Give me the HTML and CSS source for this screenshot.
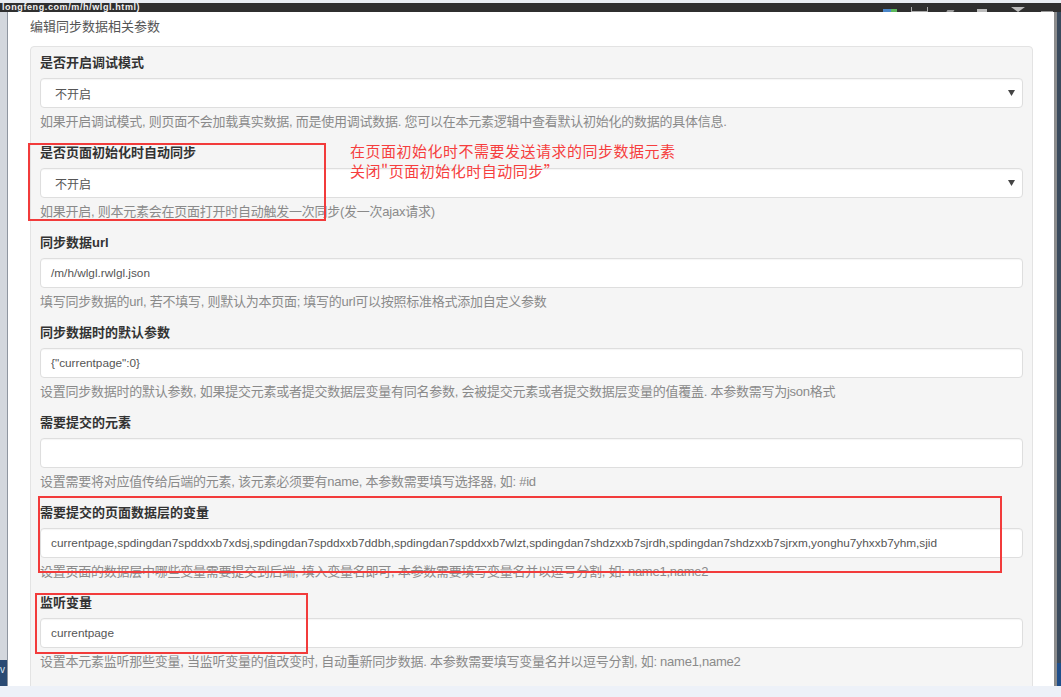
FILE: index.html
```html
<!DOCTYPE html>
<html lang="zh-CN">
<head>
<meta charset="utf-8">
<title>编辑同步数据相关参数</title>
<link rel="stylesheet" href="styles.css">
</head>
<body>
<div class="screen">
  <div class="topstrip"></div>
  <div class="titlebar">
    <span class="url">longfeng.com/m/h/wlgl.html)</span>
    <div class="tray">
      <span class="ti ti-net"></span>
      <span class="ti ti-kbd"></span>
      <span class="ti ti-pen"></span>
      <span class="ti ti-bat"></span>
      <span class="ti ti-wifi"></span>
      <span class="ti ti-vol"></span>
    </div>
  </div>
  <div class="middle">
    <div class="leftedge"><div class="leftblock">v</div></div>
    <div class="modal">
      <div class="modal-title">编辑同步数据相关参数</div>
      <div class="panel">
        <div class="group">
          <div class="label">是否开启调试模式</div>
          <div class="control select"><span class="val sel">不开启</span><svg class="caret" width="7" height="6" viewBox="0 0 7 6"><path d="M0 0H7L3.5 6Z" fill="#444"/></svg></div>
          <div class="help">如果开启调试模式, 则页面不会加载真实数据, 而是使用调试数据. 您可以在本元素逻辑中查看默认初始化的数据的具体信息.</div>
        </div>
        <div class="group">
          <div class="label">是否页面初始化时自动同步</div>
          <div class="control select"><span class="val sel">不开启</span><svg class="caret" width="7" height="6" viewBox="0 0 7 6"><path d="M0 0H7L3.5 6Z" fill="#444"/></svg></div>
          <div class="help">如果开启, 则本元素会在页面打开时自动触发一次同步(发一次ajax请求)</div>
        </div>
        <div class="group">
          <div class="label">同步数据url</div>
          <div class="control"><span class="val">/m/h/wlgl.rwlgl.json</span></div>
          <div class="help">填写同步数据的url, 若不填写, 则默认为本页面; 填写的url可以按照标准格式添加自定义参数</div>
        </div>
        <div class="group">
          <div class="label">同步数据时的默认参数</div>
          <div class="control"><span class="val">{"currentpage":0}</span></div>
          <div class="help">设置同步数据时的默认参数, 如果提交元素或者提交数据层变量有同名参数, 会被提交元素或者提交数据层变量的值覆盖. 本参数需写为json格式</div>
        </div>
        <div class="group">
          <div class="label">需要提交的元素</div>
          <div class="control"><span class="val"></span></div>
          <div class="help">设置需要将对应值传给后端的元素, 该元素必须要有name, 本参数需要填写选择器, 如: #id</div>
        </div>
        <div class="group">
          <div class="label">需要提交的页面数据层的变量</div>
          <div class="control"><span class="val">currentpage,spdingdan7spddxxb7xdsj,spdingdan7spddxxb7ddbh,spdingdan7spddxxb7wlzt,spdingdan7shdzxxb7sjrdh,spdingdan7shdzxxb7sjrxm,yonghu7yhxxb7yhm,sjid</span></div>
          <div class="help">设置页面的数据层中哪些变量需要提交到后端, 填入变量名即可, 本参数需要填写变量名并以逗号分割, 如: name1,name2</div>
        </div>
        <div class="group">
          <div class="label">监听变量</div>
          <div class="control"><span class="val">currentpage</span></div>
          <div class="help">设置本元素监听那些变量, 当监听变量的值改变时, 自动重新同步数据. 本参数需要填写变量名并以逗号分割, 如: name1,name2</div>
        </div>
      </div>
      <div class="mark mark-1"></div>
      <div class="mark mark-2"></div>
      <div class="mark mark-3"></div>
      <div class="note">在页面初始化时不需要发送请求的同步数据元素<br>关闭"页面初始化时自动同步”</div>
    </div>
    <div class="rightedge"></div>
    <div class="rightdesk"><div class="rightblock"></div></div>
  </div>
  <div class="bottombar"></div>
</div>
</body>
</html>
```

FILE: styles.css
```css
html, body {
  margin: 0;
  padding: 0;
}
body {
  width: 1061px;
  height: 697px;
  overflow: hidden;
  background: #22384f;
  font-family: "Liberation Sans", "Noto Sans CJK SC", sans-serif;
}
.screen {
  display: flex;
  flex-direction: column;
  height: 697px;
}
.topstrip {
  height: 3px;
  background: #e9edf3;
}
.titlebar {
  height: 9px;
  background: #2f2f2f;
  overflow: hidden;
  display: flex;
  justify-content: space-between;
  align-items: center;
}
.url {
  color: #f2f2f2;
  font-weight: bold;
  font-size: 9px;
  line-height: 9px;
  padding-left: 2px;
  letter-spacing: 0.6px;
}
.tray {
  display: flex;
  align-items: flex-end;
  height: 9px;
  padding-right: 8px;
}
.ti {
  display: block;
}
.ti-net {
  width: 14px;
  height: 3px;
  background: linear-gradient(90deg, #4a86c8 60%, #5cb85c 60%);
  margin-right: 14px;
}
.ti-kbd {
  width: 15px;
  height: 4px;
  border: 1px solid #aaa;
  border-top: none;
  margin-right: 20px;
}
.ti-pen {
  width: 7px;
  height: 4px;
  border-bottom: 2px solid #999;
  transform: skewX(-30deg);
  margin-right: 22px;
}
.ti-bat {
  width: 10px;
  height: 3px;
  background: #bbb;
  margin-right: 24px;
}
.ti-wifi {
  width: 0;
  height: 0;
  border-left: 7px solid transparent;
  border-right: 7px solid transparent;
  border-top: 5px solid #bbb;
  margin-right: 16px;
}
.ti-vol {
  width: 12px;
  height: 3px;
  border-bottom: 1px solid #999;
}
.middle {
  display: flex;
  height: 674px;
}
.leftedge {
  width: 7px;
  background: #d3d7dd;
  border-right: 1px solid #8f96a0;
  display: flex;
  flex-direction: column;
  justify-content: flex-end;
}
.leftblock {
  height: 26px;
  background: #2a4a73;
  color: #dfe6f0;
  font-size: 10px;
  line-height: 20px;
  overflow: hidden;
}
.modal {
  flex: 1;
  background: #ffffff;
  position: relative;
  overflow: hidden;
  padding-top: 6px;
}
.modal-title {
  font-size: 13px;
  line-height: 18px;
  color: #555;
  padding-left: 22px;
}
.panel {
  margin: 10px 21px 0 22px;
  background: #f5f5f5;
  border: 1px solid #e3e3e3;
  border-radius: 4px;
  padding: 7px 9px 20px 9px;
}
.group {
  margin-bottom: 13px;
}
.label {
  font-size: 13px;
  line-height: 18px;
  font-weight: bold;
  color: #333;
  margin-bottom: 6px;
}
.control {
  height: 30px;
  box-sizing: border-box;
  background: #fff;
  border: 1px solid #dedede;
  border-radius: 4px;
  box-shadow: inset 0 1px 1px rgba(0, 0, 0, 0.04);
  display: flex;
  align-items: center;
  padding: 0 10px;
}
.val {
  font-size: 11.8px;
  color: #555;
  white-space: nowrap;
  flex: 1;
}
.val.sel {
  padding-left: 4px;
  font-size: 12px;
}
.caret {
  display: block;
  margin-right: -3px;
}
.help {
  margin-top: 5px;
  font-size: 13px;
  line-height: 18px;
  color: #8a8a8a;
  white-space: nowrap;
  letter-spacing: -0.25px;
}
.mark {
  position: absolute;
  border: 2px solid #f23b3b;
  box-sizing: border-box;
}
.mark-1 {
  left: 20px;
  top: 131px;
  width: 298px;
  height: 78px;
}
.mark-2 {
  left: 30px;
  top: 484px;
  width: 964px;
  height: 77px;
}
.mark-3 {
  left: 27px;
  top: 581px;
  width: 273px;
  height: 61px;
}
.note {
  position: absolute;
  left: 342px;
  top: 129px;
  font-family: "Noto Sans CJK SC", sans-serif;
  font-size: 15px;
  letter-spacing: 0.5px;
  line-height: 20px;
  color: #f63e3e;
  white-space: nowrap;
}
.rightedge {
  width: 3px;
  background: #8c8c8c;
}
.rightdesk {
  width: 4px;
  background: #3a4a5c;
  display: flex;
  flex-direction: column;
  justify-content: flex-end;
}
.rightblock {
  height: 23px;
  background: #1f4e8a;
}
.bottombar {
  height: 11px;
  background: #edf1f8;
}
```
